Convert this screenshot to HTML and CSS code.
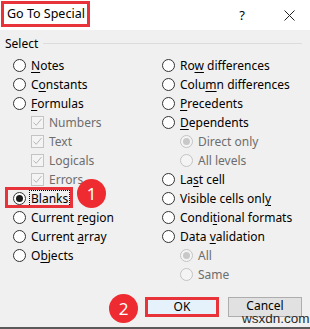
FILE: index.html
```html
<!DOCTYPE html>
<html>
<head>
<meta charset="utf-8">
<link rel="stylesheet" href="styles.css">
</head>
<body>
<div class="dialog">
  <div class="titlebar">
    <span class="title">Go To Special</span>
    <span class="tb-btn help">?</span>
    <span class="tb-btn close">
      <svg width="11" height="11" viewBox="0 0 11 11"><path d="M0.5 0.5 L10.5 10.5 M10.5 0.5 L0.5 10.5" stroke="#222" stroke-width="1"/></svg>
    </span>
  </div>
  <div class="content">
    <div class="group-label"><span>Select</span><i class="rule"></i></div>
    <div class="columns">
      <div class="col">
        <div class="row"><span class="radio"></span><span class="lbl"><u>N</u>otes</span></div>
        <div class="row"><span class="radio"></span><span class="lbl">C<u>o</u>nstants</span></div>
        <div class="row"><span class="radio"></span><span class="lbl"><u>F</u>ormulas</span></div>
        <div class="row sub dis"><span class="check"><svg width="11" height="11" viewBox="0 0 11 11"><path d="M1.5 5.5 L4.2 8.3 L9.5 2" fill="none" stroke="#b8b8b8" stroke-width="1"/></svg></span><span class="lbl">Numbers</span></div>
        <div class="row sub dis"><span class="check"><svg width="11" height="11" viewBox="0 0 11 11"><path d="M1.5 5.5 L4.2 8.3 L9.5 2" fill="none" stroke="#b8b8b8" stroke-width="1"/></svg></span><span class="lbl">Text</span></div>
        <div class="row sub dis"><span class="check"><svg width="11" height="11" viewBox="0 0 11 11"><path d="M1.5 5.5 L4.2 8.3 L9.5 2" fill="none" stroke="#b8b8b8" stroke-width="1"/></svg></span><span class="lbl">Logicals</span></div>
        <div class="row sub dis"><span class="check"><svg width="11" height="11" viewBox="0 0 11 11"><path d="M1.5 5.5 L4.2 8.3 L9.5 2" fill="none" stroke="#b8b8b8" stroke-width="1"/></svg></span><span class="lbl">Errors</span></div>
        <div class="row"><span class="radio on"></span><span class="lbl focus">Blan<u>k</u>s</span></div>
        <div class="row"><span class="radio"></span><span class="lbl">Current <u>r</u>egion</span></div>
        <div class="row"><span class="radio"></span><span class="lbl">Current <u>a</u>rray</span></div>
        <div class="row"><span class="radio"></span><span class="lbl">O<u>b</u>jects</span></div>
      </div>
      <div class="col">
        <div class="row"><span class="radio"></span><span class="lbl">Ro<u>w</u> differences</span></div>
        <div class="row"><span class="radio"></span><span class="lbl">Colu<u>m</u>n differences</span></div>
        <div class="row"><span class="radio"></span><span class="lbl"><u>P</u>recedents</span></div>
        <div class="row"><span class="radio"></span><span class="lbl"><u>D</u>ependents</span></div>
        <div class="row sub dis"><span class="radio on"></span><span class="lbl">Direct only</span></div>
        <div class="row sub dis"><span class="radio"></span><span class="lbl">All levels</span></div>
        <div class="row"><span class="radio"></span><span class="lbl">La<u>s</u>t cell</span></div>
        <div class="row"><span class="radio"></span><span class="lbl">Visible cells onl<u>y</u></span></div>
        <div class="row"><span class="radio"></span><span class="lbl">Condi<u>t</u>ional formats</span></div>
        <div class="row"><span class="radio"></span><span class="lbl">Data <u>v</u>alidation</span></div>
        <div class="row sub dis"><span class="radio on"></span><span class="lbl">All</span></div>
        <div class="row sub dis"><span class="radio"></span><span class="lbl">Same</span></div>
      </div>
    </div>
    <div class="footer">
      <button class="btn ok">OK</button>
      <button class="btn cancel">Cancel</button>
    </div>
  </div>
  <div class="mark-box"></div>
  <div class="badge b1">1</div>
  <div class="badge b2">2</div>
  <div class="watermark">wsxdn.com</div>
</div>
</body>
</html>
```
FILE: styles.css
```css
* { box-sizing: border-box; }
html, body { margin: 0; padding: 0; }
body {
  width: 310px;
  height: 329px;
  overflow: hidden;
  background: #f0f0f0;
  font-family: "Noto Sans", "Open Sans", sans-serif;
  font-size: 12px;
  color: #000;
}
.dialog {
  position: relative;
  width: 310px;
  height: 329px;
  border-bottom: 2px solid #5a5a5a;
  display: flex;
  flex-direction: column;
}
.titlebar {
  height: 30px;
  background: #fff;
  display: flex;
  align-items: flex-start;
  flex-shrink: 0;
}
.title {
  margin: 1px 0 0 1px;
  height: 26px;
  width: 89px;
  border: 3px solid #e8333b;
  padding-left: 3px;
  line-height: 20px;
  font-size: 12.5px;
}
.tb-btn {
  height: 30px;
  display: flex;
  align-items: center;
  justify-content: center;
}
.help {
  margin-left: 145px;
  width: 14px;
  font-size: 13px;
}
.close {
  margin-left: 33px;
  width: 14px;
}
.content {
  flex: 1;
  padding: 6px 8px 0 5px;
  display: flex;
  flex-direction: column;
}
.group-label {
  display: flex;
  align-items: center;
  height: 16px;
  line-height: 16px;
}
.group-label .rule {
  flex: 1;
  height: 1px;
  background: #dcdcdc;
  margin-left: 5px;
  margin-top: -1px;
}
.columns {
  display: grid;
  grid-template-columns: 149px 1fr;
  margin-top: 4px;
  padding-left: 8px;
}
.row {
  height: 19px;
  display: flex;
  align-items: center;
  gap: 5px;
  white-space: nowrap;
}
.row.sub { padding-left: 18px; }
.row.dis { color: #6d6d6d; }
.lbl { line-height: 15px; }
.lbl u { text-decoration-thickness: 1px; text-underline-offset: 2px; }
.radio {
  width: 13px;
  height: 13px;
  border-radius: 50%;
  border: 1px solid #333;
  background: #fff;
  display: flex;
  align-items: center;
  justify-content: center;
  flex-shrink: 0;
}
.radio.on::after {
  content: "";
  width: 7px;
  height: 7px;
  border-radius: 50%;
  background: #1a1a1a;
}
.dis .radio { border-color: #c4c4c4; background: #f4f4f4; }
.dis .radio.on::after { background: #c8c8c8; }
.check {
  width: 13px;
  height: 13px;
  border: 1px solid #c4c4c4;
  background: #f4f4f4;
  display: flex;
  align-items: center;
  justify-content: center;
  flex-shrink: 0;
}
.focus {
  outline: 1px dotted #000;
  outline-offset: 0;
  padding: 0 1px;
  margin-left: -1px;
}
.footer {
  margin-top: auto;
  margin-bottom: 10px;
  display: flex;
  justify-content: flex-end;
  gap: 9px;
}
.btn {
  width: 74px;
  height: 20px;
  font-family: inherit;
  font-size: 12px;
  line-height: 14px;
  border: 1px solid #adadad;
  background: #e1e1e1;
  color: #000;
  padding: 0;
}
.btn.cancel {
  padding-bottom: 3px;
}
.btn.ok {
  border: 3px solid #e8333b;
  background: #e5f1fb;
}
.mark-box {
  position: absolute;
  left: 5px;
  top: 187px;
  width: 68px;
  height: 21px;
  border: 3px solid #e8333b;
}
.badge {
  position: absolute;
  width: 29px;
  height: 29px;
  border-radius: 50%;
  background: #ee2b30;
  color: #fff;
  font-size: 17px;
  display: flex;
  align-items: center;
  justify-content: center;
}
.b1 { left: 77px; top: 179px; }
.b2 { left: 109px; top: 294px; }
.watermark {
  position: absolute;
  left: 242px;
  top: 313px;
  font-family: "Liberation Sans", Arial, sans-serif;
  font-size: 13.5px;
  line-height: 12px;
  color: #2a2a2a;
  background: transparent;
}
```
